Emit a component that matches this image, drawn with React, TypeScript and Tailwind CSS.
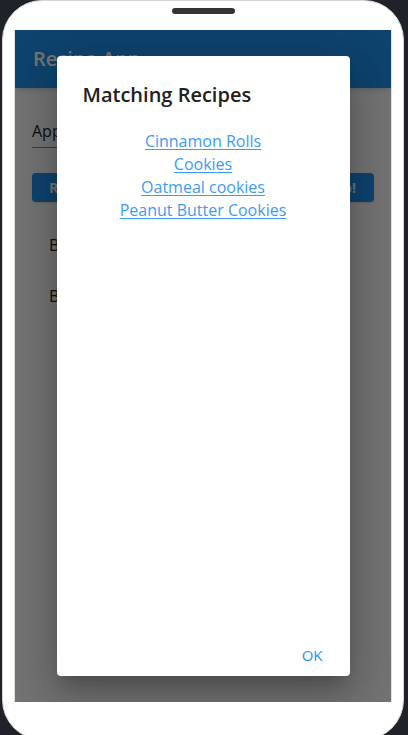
import React from "react";

const RECIPES = ["Cinnamon Rolls", "Cookies", "Oatmeal cookies", "Peanut Butter Cookies"];
const CATEGORIES = ["Breakfast", "Baking"];

export default function App() {
  return (
    <div
      className="h-[735px] w-[408px] overflow-hidden bg-[#1f2228] pl-[2px]"
      style={{ fontFamily: '"Open Sans", "Noto Sans", sans-serif' }}
    >
      {/* phone frame */}
      <div className="h-[740px] w-[402px] rounded-[40px] border border-[#d6d6d6] bg-white px-[11px] pt-[7px]">
        <div className="mx-auto h-[6px] w-[63px] rounded-full bg-[#333333]" />

        {/* screen */}
        <div className="relative mt-[16px] h-[672px] w-[378px] overflow-hidden border-x border-[#e0e0e0] bg-white">
          <div className="flex h-[58px] items-center bg-[#2196f3] px-[18px] text-[20px] font-semibold text-white shadow-md">
            Recipe App
          </div>

          <div className="px-[17px]">
            <div className="mt-[26px] flex h-[34px] w-[260px] items-center border-b border-[#8a8a8a] text-[16px] text-[#222]">
              Apple
            </div>

            <div className="mt-[25px] flex justify-between gap-3">
              <button className="h-[29px] rounded-[4px] bg-[#2196f3] px-[17px] text-[14px] font-bold text-white shadow">
                Random
              </button>
              <button className="h-[29px] rounded-[4px] bg-[#2196f3] px-[18px] text-[14px] font-bold text-white shadow">
                Go!
              </button>
            </div>

            <ul className="mt-[17px]">
              {CATEGORIES.map((c) => (
                <li key={c} className="flex h-[51px] items-center px-[17px] text-[16px] text-[#222]">
                  {c}
                </li>
              ))}
            </ul>
          </div>

          {/* backdrop + dialog */}
          <div className="absolute inset-0 flex items-center justify-center bg-black/55">
            <div className="flex h-[620px] w-[293px] flex-col rounded-[4px] bg-white shadow-[0_11px_15px_-7px_rgba(0,0,0,0.2),0_24px_38px_3px_rgba(0,0,0,0.14),0_9px_46px_8px_rgba(0,0,0,0.12)]">
              <h2 className="px-[26px] pt-[23px] text-[20px] font-semibold leading-[32px] text-[#212121]">
                Matching Recipes
              </h2>

              <div className="mt-[19px] flex flex-col items-center">
                {RECIPES.map((r) => (
                  <a
                    key={r}
                    href="#"
                    className="text-[16px] leading-[23px] text-[#3d9bf5] underline underline-offset-2"
                  >
                    {r}
                  </a>
                ))}
              </div>

              <div className="mt-auto flex justify-end px-[19px] pb-[3px]">
                <button className="h-[36px] px-[8px] text-[15px] font-medium text-[#2f8ff0]">OK</button>
              </div>
            </div>
          </div>
        </div>
      </div>
    </div>
  );
}
